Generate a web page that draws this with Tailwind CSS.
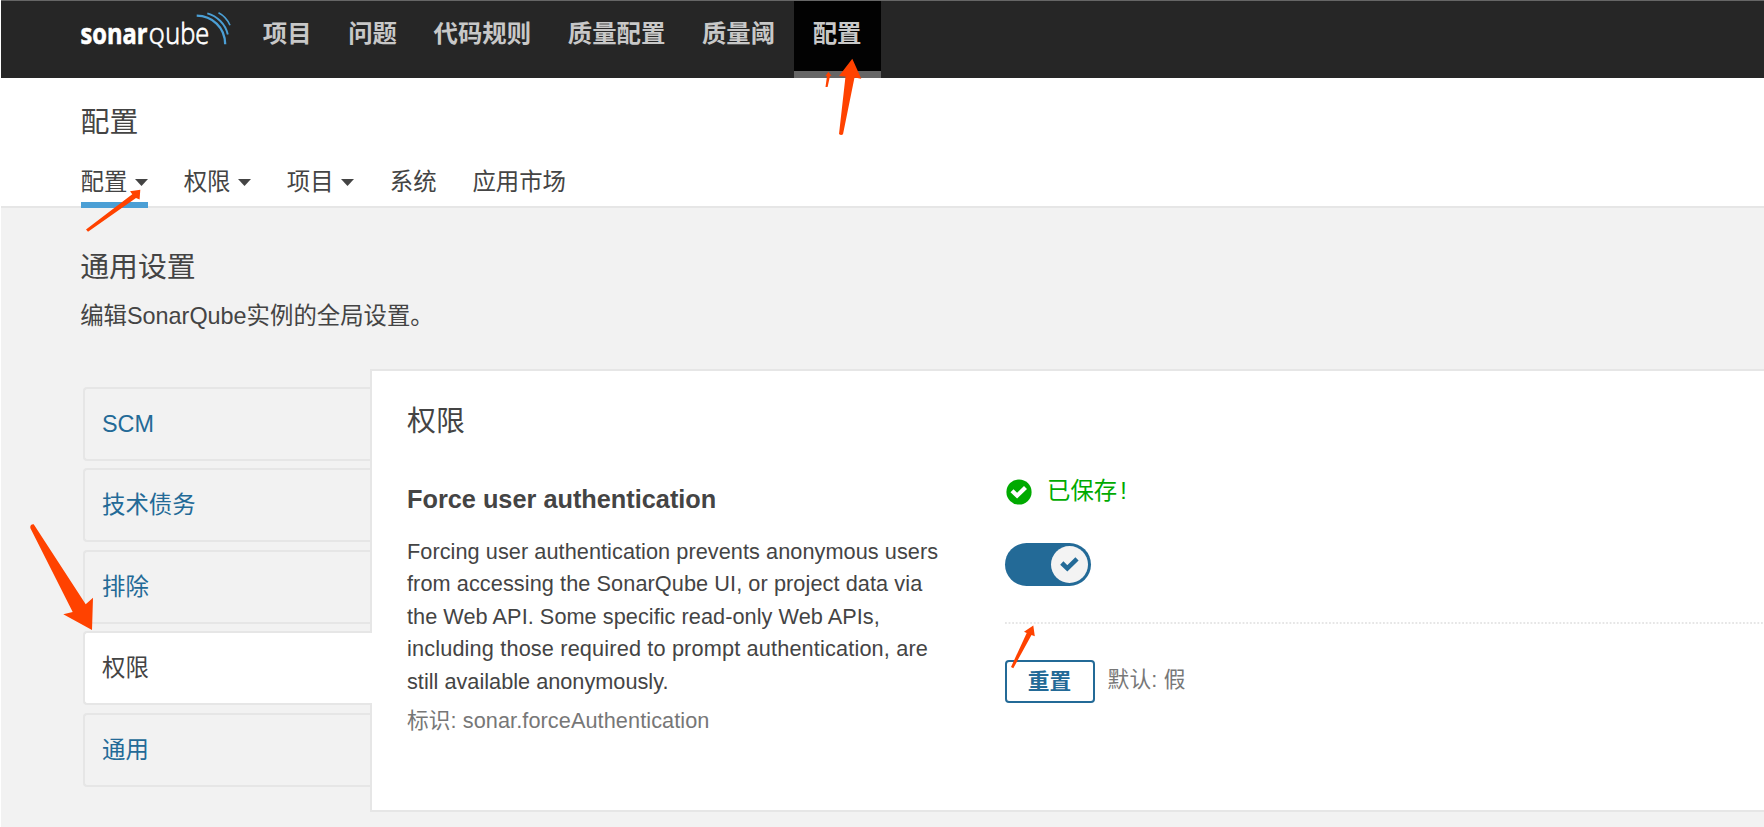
<!DOCTYPE html>
<html lang="zh-CN">
<head>
<meta charset="utf-8">
<title>配置 - SonarQube</title>
<script src="https://cdn.jsdelivr.net/npm/@tailwindcss/browser@4"></script>
</head>
<body class="relative w-[1764px] h-[827px] overflow-hidden bg-white pl-px font-['Liberation_Sans','Noto_Sans_CJK_SC',sans-serif] text-[23.4px] text-[#444]">
<div class="flex h-full flex-col bg-[#f2f2f2]">
  <nav class="flex h-[78px] shrink-0 border-t border-[#666] bg-[#262626] pl-[79px]">
    <svg class="h-[60px] w-[164.500px] shrink-0" viewBox="80 1 164.500 60" fill="none">
      <g fill="#fff" stroke="#fff" font-family="Open Sans, sans-serif">
        <text x="80.500" y="44.300" font-size="29" font-weight="700" stroke-width=".6" textLength="67" lengthAdjust="spacingAndGlyphs">sonar</text>
        <text x="148.800" y="44.300" font-size="22" font-weight="400" stroke-width=".3" textLength="16" lengthAdjust="spacingAndGlyphs">Q</text>
        <text x="165.300" y="44.300" font-size="29" font-weight="300" stroke-width=".8" textLength="44" lengthAdjust="spacingAndGlyphs">ube</text>
      </g>
      <g stroke="#4b9fd5">
        <path d="M196.7 15.7C212 16 225 27 225.2 44.3" stroke-width="2.3"/>
        <path d="M207.3 13.3C217 16 225.5 24 227.8 34.5" stroke-width="1.9"/>
        <path d="M218.5 12.7C223 15 227.5 19.500 230 25.200" stroke-width="1.6"/>
      </g>
    </svg>
    <ul class="flex text-[24.4px] font-bold leading-[66px] text-[#c8c8c8]">
      <li class="h-[77px] px-[18.3px]">项目</li>
      <li class="h-[77px] px-[18.3px]">问题</li>
      <li class="h-[77px] px-[18.3px]">代码规则</li>
      <li class="h-[77px] px-[18.3px]">质量配置</li>
      <li class="h-[77px] pl-[18.3px] pr-[18.8px]">质量阈</li>
      <li class="h-[77px] border-b-[7px] border-[#666] bg-[#020202] pl-[18.8px] pr-[19.500px]">配置</li>
    </ul>
  </nav>
  <header class="flex h-[130px] shrink-0 flex-col border-b-2 border-[#e6e6e6] bg-white pl-[79.600px]">
    <h1 class="pt-[24px] text-[28.9px] leading-[40px]">配置</h1>
    <ul class="mt-[16px] flex h-[50px] gap-[35.800px] leading-[48px]">
      <li class="flex h-[50px] items-start gap-[7.500px] border-b-[6px] border-[#4b9fd5]">配置<svg class="mt-[21px] h-[7px] w-[13px]" viewBox="0 0 13 7"><path d="M0 0H13L6.500 7Z" fill="#444"/></svg></li>
      <li class="flex items-start gap-[7.500px]">权限<svg class="mt-[21px] h-[7px] w-[13px]" viewBox="0 0 13 7"><path d="M0 0H13L6.500 7Z" fill="#444"/></svg></li>
      <li class="flex items-start gap-[7.500px]">项目<svg class="mt-[21px] h-[7px] w-[13px]" viewBox="0 0 13 7"><path d="M0 0H13L6.500 7Z" fill="#444"/></svg></li>
      <li>系统</li>
      <li>应用市场</li>
    </ul>
  </header>
  <main class="flex min-h-0 grow flex-col">
    <div class="pl-[79.200px] pt-[39px]">
      <h2 class="text-[28.9px] leading-[40px]">通用设置</h2>
      <p class="mt-[11px] leading-[36px]">编辑SonarQube实例的全局设置。</p>
    </div>
    <div class="mt-[35px] flex h-[443px] shrink-0 pl-[82px]">
      <ul class="z-10 -mr-[2px] mt-[18px] flex w-[289px] flex-col gap-[7.400px] leading-[71px] text-[#236a97]">
        <li class="mr-[2px] h-[74px] rounded-l-[4px] border-2 border-r-0 border-[#e6e6e6] pl-[17px]">SCM</li>
        <li class="mr-[2px] h-[74px] rounded-l-[4px] border-2 border-r-0 border-[#e6e6e6] pl-[17px]">技术债务</li>
        <li class="mr-[2px] h-[74px] rounded-l-[4px] border-2 border-r-0 border-[#e6e6e6] pl-[17px]">排除</li>
        <li class="h-[74px] rounded-l-[4px] border-2 border-r-0 border-[#e6e6e6] bg-white pl-[17px] text-[#444]">权限</li>
        <li class="mr-[2px] h-[74px] rounded-l-[4px] border-2 border-r-0 border-[#e6e6e6] pl-[17px]">通用</li>
      </ul>
      <section class="flex grow flex-col border-2 border-r-0 border-[#e6e6e6] bg-white pl-[35px]">
        <h2 class="mt-[30px] text-[28.9px] leading-[40px]">权限</h2>
        <div class="flex">
          <div class="w-[597.500px] shrink-0 pt-[40px]">
            <h3 class="text-[25.3px] font-bold leading-[36px]">Force user authentication</h3>
            <p class="mt-[18.500px] whitespace-nowrap text-[21.7px] leading-[32.5px] tracking-[0.080px]"><span class="tracking-[0.060px]">Forcing user authentication prevents anonymous users</span><br>from accessing the SonarQube UI, or project data via<br><span class="tracking-[0.050px]">the Web API. Some specific read-only Web APIs,</span><br><span class="tracking-[0.160px]">including those required to prompt authentication, are</span><br><span class="tracking-[0.010px]">still available anonymously.</span></p>
            <p class="mt-[7px] text-[21.7px] leading-[32px] tracking-[0.080px] text-[#777]">标识: sonar.forceAuthentication</p>
          </div>
          <div class="flex grow flex-col pt-[33px]">
            <div class="flex h-[36px] items-center text-[#0a0]">
              <svg class="ml-[1.500px] mr-[15px] h-[26px] w-[26px]" viewBox="0 0 26 26"><circle cx="13" cy="13" r="12.600" fill="#0a0"/><path d="M4.500 13.300L7.500 10.300L11.100 13.800L18 7L21 10L11.100 19.600Z" fill="#fff"/></svg>
              <span>已保存<span class="ml-[3px]">!</span></span>
            </div>
            <div class="mt-[32.500px] flex h-[43.500px] w-[86.500px] items-center justify-end rounded-full bg-[#236a97] pr-[3.500px]">
              <span class="flex size-[36.500px] items-center justify-center rounded-full bg-[#f3f3f3]"><svg class="h-[16px] w-[19px]" viewBox="0 0 19 16"><path d="M1.800 7L7.300 12.300L17 2.800" fill="none" stroke="#236a97" stroke-width="4.600"/></svg></span>
            </div>
            <svg class="mt-[36px] h-[2px] w-full" aria-hidden="true"><path d="M0 1H760" stroke="#e6e6e6" stroke-width="2" stroke-dasharray="1.8 1.8"/></svg>
            <div class="mt-[36px] flex h-[43px] text-[21.7px]">
              <button class="w-[90px] rounded-[4px] border-2 border-[#236a97] font-semibold leading-[38px] text-[#236a97]">重置</button>
              <span class="ml-[13px] leading-[39px] tracking-[0.200px] text-[#777]">默认: 假</span>
            </div>
          </div>
        </div>
      </section>
    </div>
  </main>
</div>
<svg class="pointer-events-none absolute left-0 top-0 z-20 h-[827px] w-[1764px]" viewBox="0 0 1764 827" fill="#ff4200">
  <path d="M852.300 58.700L839 76L845.500 76.500L839 134Q841 136 843 134.300L854.500 77.500L861.300 78.700Z"/>
  <path d="M828.300 71.700L825.500 76L827 76L825.500 87L827.600 87L830 76L831.500 75.800Z"/>
  <path d="M140.300 189.700L130 191.300L132.300 194.300L86 229.500L88 231.800L136 198L139.600 199.600Z"/>
  <path d="M30.300 528Q30 524 33.700 524.300L85.700 604.300L93 597.700L92 630L63.300 614.300L72.700 612Z"/>
  <path d="M1033.300 625.500L1024 631.700L1026.700 633L1011 667L1013.300 668.300L1031.500 635L1034.800 636.300Z"/>
</svg>
</body>
</html>
